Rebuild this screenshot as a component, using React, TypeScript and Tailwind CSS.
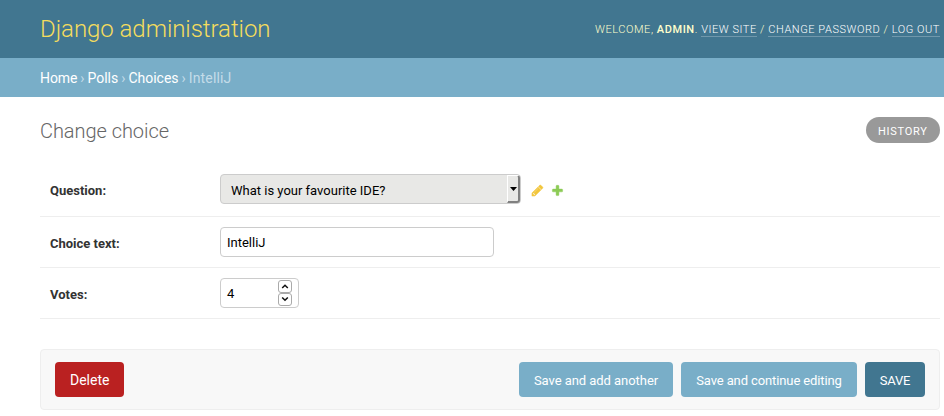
import type { ReactNode } from 'react';

const PENCIL =
  'M491 1536l91-91-235-235-91 91v107h128v128h107zm523-928q0-22-22-22-10 0-17 7l-542 542q-7 7-7 17 0 22 22 22 10 0 17-7l542-542q7-7 7-17zm-54-192l416 416-832 832h-416v-416zm683 96q0 53-37 90l-166 166-416-416 166-165q36-38 90-38 53 0 91 38l235 234q37 39 37 91z';
const PLUS =
  'M1600 796v192q0 40-28 68t-68 28h-416v416q0 40-28 68t-68 28h-192q-40 0-68-28t-28-68v-416h-416q-40 0-68-28t-28-68v-192q0-40 28-68t68-28h416v-416q0-40 28-68t68-28h192q40 0 68 28t28 68v416h416q40 0 68 28t28 68z';

function HeaderLink({ children }: { children: ReactNode }) {
  return (
    <a className="border-b border-white/25 text-white" href="#">
      {children}
    </a>
  );
}

function Row({ label, height, children }: { label: string; height: string; children: ReactNode }) {
  return (
    <div className={`flex items-start border-b border-[#eee] px-[10px] pt-[10px] ${height}`}>
      <label className="w-[170px] pt-[9px] text-[13px] leading-[15px] font-bold text-[#333]">{label}</label>
      <div className="flex items-center">{children}</div>
    </div>
  );
}

function Spin({ d }: { d: string }) {
  return (
    <button className="flex h-[13px] w-[14px] items-center justify-center rounded-[3px] border border-[#aaa] bg-white">
      <svg width="8" height="5" viewBox="0 0 8 5" fill="none" stroke="#111" strokeWidth="1.5">
        <path d={d} />
      </svg>
    </button>
  );
}

export default function App() {
  return (
    <div className="h-[416px] w-[944px] overflow-hidden bg-white font-['Roboto',sans-serif] text-[13px] text-[#333]">
      <header className="flex h-[58px] items-center justify-between bg-[#417690] pr-1 pl-10">
        <h1 className="text-[24px] leading-[28px] font-light tracking-[-0.05px] text-[#f5dd5d]">
          Django administration
        </h1>
        <div className="text-[11px] leading-[13px] font-light tracking-[0.56px] text-[#ffc] uppercase">
          Welcome, <strong className="font-medium">admin</strong>. <HeaderLink>View site</HeaderLink> /{' '}
          <HeaderLink>Change password</HeaderLink> / <HeaderLink>Log out</HeaderLink>
        </div>
      </header>

      <nav className="h-[39px] bg-[#79aec8] pt-[12px] pl-10 text-[14px] leading-[16px] [word-spacing:-0.5px] text-[#c4dce8]">
        <a className="tracking-[-0.1px] text-white" href="#">Home</a> › <a className="text-white" href="#">Polls</a> ›{' '}
        <a className="text-white" href="#">Choices</a> › <span className="tracking-[0.15px]">IntelliJ</span>
      </nav>

      <main className="pr-1 pl-10">
        <div className="flex h-[67px] items-start justify-between pt-5">
          <h2 className="pt-[2px] text-[20px] leading-[24px] font-light tracking-[-0.05px] text-[#666]">
            Change choice
          </h2>
          <a
            className="flex h-[26px] w-[74px] items-center rounded-full bg-[#999] pt-[4px] pl-3 text-[11px] leading-[14px] tracking-[0.75px] text-white uppercase"
            href="#"
          >
            History
          </a>
        </div>

        <Row label="Question:" height="h-[53px]">
          <div className="flex h-[30px] w-[301px] items-center justify-between rounded-[4px] border border-[#ccc] bg-[#e8e8e6] pl-[10px] text-black">
            <span className="pt-[3px]">What is your favourite IDE?</span>
            <span className="flex h-[28px] w-[13px] items-center justify-center rounded-r-[3px] border-t border-r-2 border-b-2 border-l border-t-white border-r-[#808080] border-b-[#808080] border-l-white bg-[#e8e8e6]">
              <svg width="7" height="4" viewBox="0 0 7 4">
                <path d="M0 0h7L3.5 4z" fill="#000" />
              </svg>
            </span>
          </div>
          <svg className="mt-[2px] ml-[10px] opacity-80" width="13" height="13" viewBox="0 0 1792 1792">
            <path fill="#efb80b" stroke="#efb80b" strokeWidth="60" d={PENCIL} />
          </svg>
          <svg className="mt-[2px] ml-[7px] opacity-80" width="13" height="13" viewBox="0 0 1792 1792">
            <path fill="#70bf2b" stroke="#70bf2b" strokeWidth="60" d={PLUS} />
          </svg>
        </Row>
        <Row label="Choice text:" height="h-[51px]">
          <div className="flex h-[30px] w-[274px] items-center rounded-[4px] border border-[#ccc] px-[6px] pt-px text-black">
            IntelliJ
          </div>
        </Row>
        <Row label="Votes:" height="h-[51px]">
          <div className="flex h-[30px] w-[79px] items-center justify-between rounded-[4px] border border-[#ccc] px-[6px] text-black">
            <span className="pt-px">4</span>
            <span className="flex flex-col">
              <Spin d="M1.200 4 4 1.200 6.800 4" />
              <Spin d="M1.200 .5 4 3.300 6.800 .5" />
            </span>
          </div>
        </Row>

        <div className="mt-[30px] flex h-[61px] items-center rounded-[4px] border border-[#eee] bg-[#f8f8f8] px-[14px] text-white">
          <a className="flex h-[35px] items-center rounded-[4px] bg-[#ba2121] px-[15px] pt-[2px] text-[14px]" href="#">
            Delete
          </a>
          <div className="ml-auto flex gap-2 whitespace-nowrap">
            <button className="h-[35px] w-[154px] rounded-[4px] bg-[#79aec8] pt-[2px] tracking-[-0.05px]">
              Save and add another
            </button>
            <button className="h-[35px] w-[176px] rounded-[4px] bg-[#79aec8] pt-[2px] tracking-[-0.11px]">
              Save and continue editing
            </button>
            <button className="h-[35px] w-[60px] rounded-[4px] bg-[#417690] pt-[2px] tracking-[-0.2px] uppercase">
              Save
            </button>
          </div>
        </div>
      </main>
    </div>
  );
}
